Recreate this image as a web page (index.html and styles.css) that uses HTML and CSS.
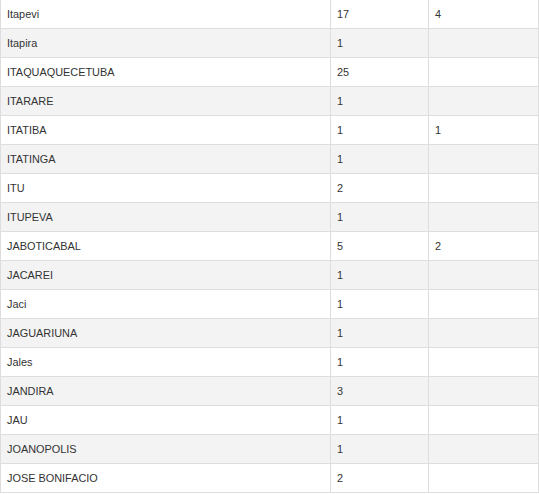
FILE: index.html
```html
<!DOCTYPE html>
<html>
<head>
<meta charset="utf-8">
<link rel="stylesheet" href="styles.css">
</head>
<body>
<table class="data-table">
<colgroup><col class="c1"><col class="c2"><col class="c3"></colgroup>
<tbody>
<tr><td>Itapevi</td><td>17</td><td>4</td></tr>
<tr><td>Itapira</td><td>1</td><td></td></tr>
<tr><td>ITAQUAQUECETUBA</td><td>25</td><td></td></tr>
<tr><td>ITARARE</td><td>1</td><td></td></tr>
<tr><td>ITATIBA</td><td>1</td><td>1</td></tr>
<tr><td>ITATINGA</td><td>1</td><td></td></tr>
<tr><td>ITU</td><td>2</td><td></td></tr>
<tr><td>ITUPEVA</td><td>1</td><td></td></tr>
<tr><td>JABOTICABAL</td><td>5</td><td>2</td></tr>
<tr><td>JACAREI</td><td>1</td><td></td></tr>
<tr><td>Jaci</td><td>1</td><td></td></tr>
<tr><td>JAGUARIUNA</td><td>1</td><td></td></tr>
<tr><td>Jales</td><td>1</td><td></td></tr>
<tr><td>JANDIRA</td><td>3</td><td></td></tr>
<tr><td>JAU</td><td>1</td><td></td></tr>
<tr><td>JOANOPOLIS</td><td>1</td><td></td></tr>
<tr><td>JOSE BONIFACIO</td><td>2</td><td></td></tr>
</tbody>
</table>
</body>
</html>
```
FILE: styles.css
```css
html, body {
  margin: 0;
  padding: 0;
  background: #fff;
}
.data-table {
  margin-top: -1px;
  width: 538px;
  table-layout: fixed;
  border-collapse: collapse;
  font-family: "Liberation Sans", Arial, sans-serif;
  font-size: 10.9px;
  color: #333;
}
.c1 { width: 330px; }
.c2 { width: 98px; }
.c3 { width: 110px; }
.data-table td {
  border: 1px solid #dddddd;
  padding: 6px 6px 6px 6px;
  line-height: 16px;
  height: 16px;
  vertical-align: top;
  white-space: nowrap;
}
.data-table tr:nth-child(even) td {
  background: #f3f3f3;
}
```
